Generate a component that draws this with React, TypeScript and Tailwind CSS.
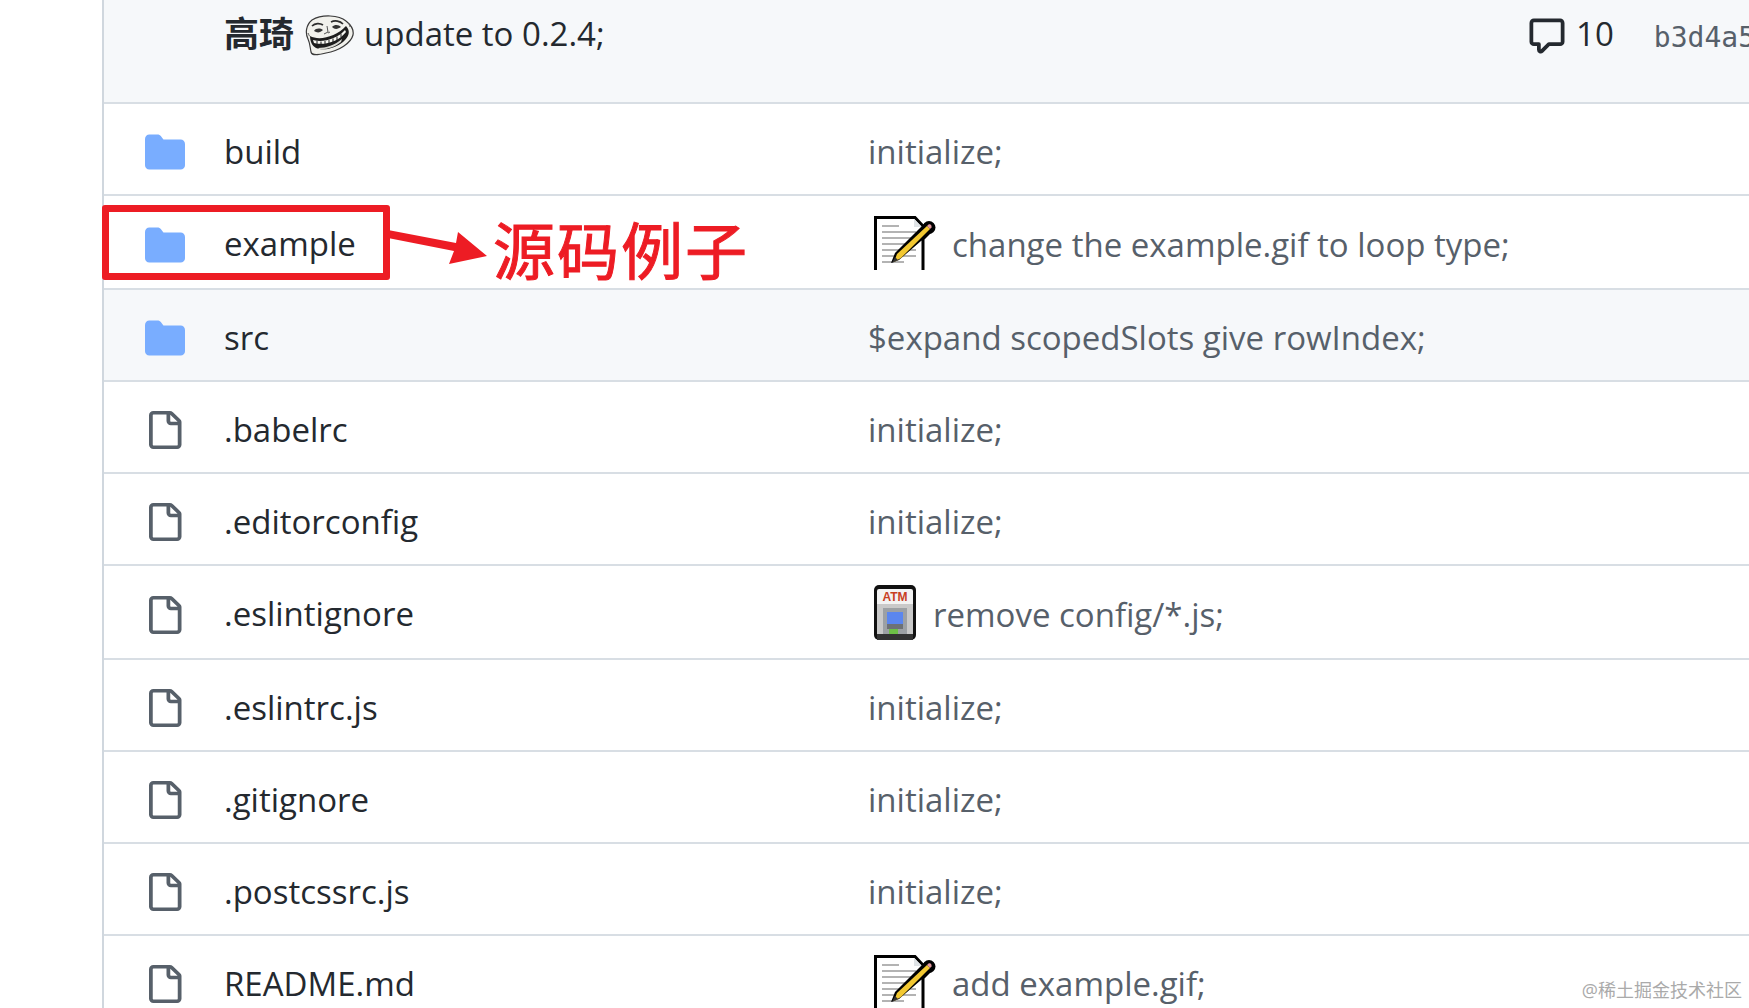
const rows = [
  { name: 'build', type: 'dir', msg: 'initialize;', h: 'h-[92px]' },
  { name: 'example', type: 'dir', msg: 'change the example.gif to loop type;', pic: 'memo', h: 'h-[94px]' },
  { name: 'src', type: 'dir', msg: '$expand scopedSlots give rowIndex;', h: 'h-[92px]', hover: true },
  { name: '.babelrc', type: 'file', msg: 'initialize;', h: 'h-[92px]' },
  { name: '.editorconfig', type: 'file', msg: 'initialize;', h: 'h-[92px]' },
  { name: '.eslintignore', type: 'file', msg: 'remove config/*.js;', pic: 'atm', h: 'h-[94px]' },
  { name: '.eslintrc.js', type: 'file', msg: 'initialize;', h: 'h-[92px]' },
  { name: '.gitignore', type: 'file', msg: 'initialize;', h: 'h-[92px]' },
  { name: '.postcssrc.js', type: 'file', msg: 'initialize;', h: 'h-[92px]' },
  { name: 'README.md', type: 'file', msg: 'add example.gif;', pic: 'memo', h: 'h-[92px]' },
];

function FolderIcon() {
  return (
    <svg viewBox="0 0 16 16" className="w-10 h-10 shrink-0" fill="#79adff">
      <path d="M1.75 1A1.75 1.75 0 0 0 0 2.75v10.5C0 14.216.784 15 1.75 15h12.5A1.75 1.75 0 0 0 16 13.25v-8.5A1.75 1.75 0 0 0 14.25 3H7.5a.25.25 0 0 1-.2-.1l-.9-1.2C6.07 1.26 5.55 1 5 1H1.75Z" />
    </svg>
  );
}

function FileIcon() {
  return (
    <svg viewBox="0 0 16 16" className="w-10 h-[38px] shrink-0 -translate-x-px" fill="#57606a" preserveAspectRatio="none">
      <path d="M2 1.75C2 .784 2.784 0 3.75 0h6.586c.464 0 .909.184 1.237.513l2.914 2.914c.329.328.513.773.513 1.237v9.586A1.75 1.75 0 0 1 13.25 16h-9.5A1.75 1.75 0 0 1 2 14.25Zm1.75-.25a.25.25 0 0 0-.25.25v12.5c0 .138.112.25.25.25h9.5a.25.25 0 0 0 .25-.25V6h-2.75A1.75 1.75 0 0 1 9 4.25V1.5Zm6.75.062V4.25c0 .138.112.25.25.25h2.688l-.011-.013-2.914-2.914-.013-.011Z" />
    </svg>
  );
}

function CommentIcon() {
  return (
    <svg viewBox="0 0 16 16" className="w-10 h-10 shrink-0" fill="#24292f">
      <path d="M1 2.75C1 1.784 1.784 1 2.75 1h10.5c.966 0 1.75.784 1.75 1.75v7.5A1.75 1.75 0 0 1 13.25 12H9.06l-2.573 2.573A1.458 1.458 0 0 1 4 13.543V12H2.75A1.75 1.75 0 0 1 1 10.25Zm1.75-.25a.25.25 0 0 0-.25.25v7.5c0 .138.112.25.25.25h2a.75.75 0 0 1 .75.75v2.19l2.72-2.72a.749.749 0 0 1 .53-.22h4.5a.25.25 0 0 0 .25-.25v-7.5a.25.25 0 0 0-.25-.25Z" />
    </svg>
  );
}

function TrollFace() {
  return (
    <svg viewBox="0 0 50 42" className="w-[50px] h-[42px] shrink-0">
      <path d="M8 5C18-1 35 0 42 6c5 4 8 9 7 14-2 8-14 16-27 18-8 2-14 3-15-1-1-5-1-9-3-13C1 18 2 10 8 5Z" fill="#f1f1ec" stroke="#3a3a3a" strokeWidth="1.2" />
      <path d="M6 21C15 26 32 22 42 11c5 5 3 11-3 16-9 7-20 9-27 6-4-2-6-7-6-12Z" fill="#1d1d1d" />
      <path d="M9 25c10 3 24-1 32-10l1 2c-7 9-21 14-32 11Z" fill="#f7f7f2" />
      <path d="M13 26v3M17 26.500v3M21 26v3.500M25 25v3.500M29 23.500v3.500M33 21.500v3.500M37 18.500v3.500" stroke="#1d1d1d" strokeWidth="1" />
      <path d="M14 33c8 0 17-3 24-9l-1 3c-6 5-15 8-22 7Z" fill="#d9d9d3" />
      <path d="M8 11c3-3 8-3 11-1M27 7c4-2 9-1 12 2" fill="none" stroke="#2c2c2c" strokeWidth="1.7" />
      <path d="M10 16c2-3 6-3 9-1-3 3-6 3-9 1ZM28 12c3-3 7-2 9 0-3 2-6 3-9 0Z" fill="#333" />
      <path d="M23 11l1 6-4 2M26 17l-2 1M4 18c1 2 1 3 3 4M44 8c1 1 2 2 2 4" fill="none" stroke="#555" strokeWidth="1" />
    </svg>
  );
}

function MemoPic() {
  return (
    <svg viewBox="0 0 62 54" className="w-[62px] h-[54px] shrink-0">
      <path d="M1.500 54V1.500H41L49 10V54" fill="#fff" stroke="#000" strokeWidth="3" />
      <path d="M40 3l8 8h-8Z" fill="#dfe3e6" />
      <path d="M8 10h17M8 16h34M8 22h34M8 28h34M8 34h34M8 40h34M8 46h22" stroke="#9a9a9a" strokeWidth="1.600" />
      <circle cx="55" cy="11.500" r="6.500" fill="#000" />
      <path d="M17 47l4-10L51 7l8 8-8 8-4 2-22 19Z" fill="#000" />
      <path d="M20 46l3-8L53 10l3 3L27 42Z" fill="#f2c832" />
      <path d="M53 10l1.500-1.500c2-1 3.500 1 3 3L56 13Z" fill="#e39aa0" />
      <path d="M18 47l3-6 3 3Z" fill="#333" />
    </svg>
  );
}

function AtmPic() {
  return (
    <svg viewBox="0 0 42 55" className="w-[42px] h-[55px] shrink-0">
      <rect x="0" y="0" width="42" height="55" rx="5" fill="#111" />
      <rect x="3" y="4" width="36" height="45" rx="2" fill="#f3f3f3" />
      <text x="21" y="16" textAnchor="middle" fontSize="12" fontWeight="700" fill="#c8401f" fontFamily="Liberation Sans, sans-serif">ATM</text>
      <rect x="3" y="19" width="36" height="30" fill="#c9c9c9" />
      <rect x="9" y="23" width="24" height="26" fill="#9ca0a4" />
      <rect x="13" y="27" width="16" height="12" fill="#5b86ee" />
      <rect x="13" y="39" width="16" height="5" fill="#6d7176" />
      <rect x="15" y="44" width="9" height="8" fill="#6dc046" />
      <rect x="3" y="49" width="36" height="6" fill="#333" />
    </svg>
  );
}

function Row({ row }: { row: (typeof rows)[number] }) {
  return (
    <div className={`flex items-center border-b-2 border-[#d8dee4] pl-[41px] pt-[5px] ${row.h} ${row.hover ? 'bg-[#f6f8fa]' : 'bg-white'}`}>
      {row.type === 'dir' ? <FolderIcon /> : <FileIcon />}
      <div className={`w-[643px] ml-[39px] mr-px shrink-0 text-[#24292f] ${row.h === 'h-[94px]' ? '-mt-0.5' : ''}`}>{row.name}</div>
      <div className="flex items-center text-[#57606a] whitespace-nowrap">
        {row.pic === 'memo' && <div className="ml-1.5 mr-4 -mt-1"><MemoPic /></div>}
        {row.pic === 'atm' && <div className="ml-1.5 mr-[17px] -mt-1"><AtmPic /></div>}
        <span>{row.msg}</span>
      </div>
    </div>
  );
}

export default function App() {
  return (
    <div className="relative w-[1749px] h-[1008px] overflow-hidden bg-white pl-[102px] font-['Open_Sans','Noto_Sans_CJK_SC',sans-serif] text-[33px] leading-[46px]">
      <div className="border-l-2 border-[#d0d7de] h-full">
        <div className="flex items-start h-[104px] bg-[#f6f8fa] border-b-2 border-[#d8dee4] pt-[11px] pl-[120px] text-[#24292f] whitespace-nowrap">
          <span className="font-bold text-[35px] mr-2.5">高琦</span>
          <div className="mt-1"><TrollFace /></div>
          <span className="ml-2.5">update to 0.2.4;</span>
          <div className="ml-auto flex items-start">
            <div className="mt-[5px]"><CommentIcon /></div>
            <span className="ml-[9px]">10</span>
            <span className="ml-10 -mr-[6px] mt-1 font-['DejaVu_Sans_Mono',monospace] text-[28px] text-[#57606a]">b3d4a5</span>
          </div>
        </div>
        {rows.map((row) => (
          <Row key={row.name} row={row} />
        ))}
      </div>

      {/* red annotation over the list */}
      <div className="absolute left-[102px] top-[205px] w-[288px] h-[75px] border-[7px] border-[#ed1c24] rounded-[3px]" />
      <svg className="absolute left-[388px] top-[225px] w-[102px] h-[44px]" viewBox="388 225 102 44">
        <polygon points="388,230 456,243 458,232 487,256 449,264 454,251 388,238" fill="#ed1c24" />
      </svg>
      <div className="absolute left-[493px] top-[215px] text-[62px] leading-[72px] tracking-[2px] text-[#ed1c24] [-webkit-text-stroke:1px_#ed1c24] whitespace-nowrap">源码例子</div>
      <div className="absolute right-[7px] bottom-[6px] text-[18px] leading-6 text-[#aaaaaa] whitespace-nowrap">@稀土掘金技术社区</div>
    </div>
  );
}
